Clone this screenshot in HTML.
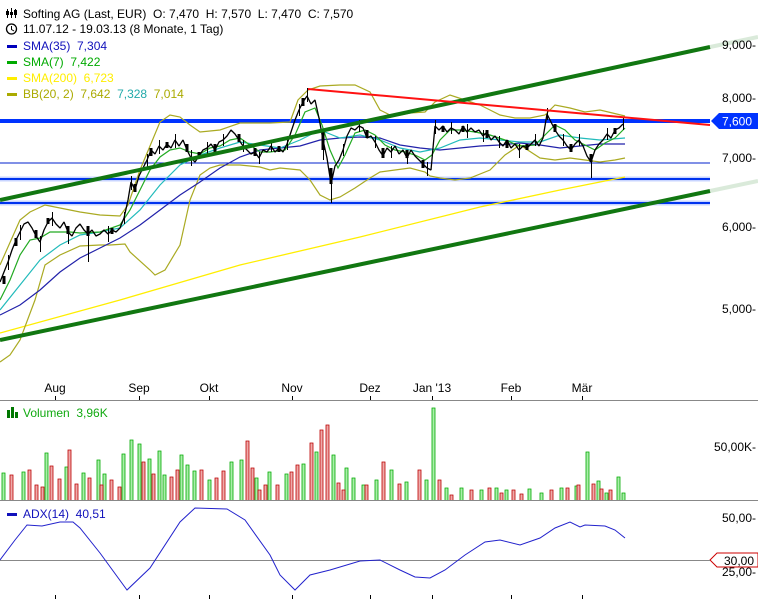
<!DOCTYPE html>
<html><head><meta charset="utf-8"><style>
html,body{margin:0;padding:0;background:#fff;}
svg{display:block;font-family:"Liberation Sans",sans-serif;font-size:12px;}
</style></head><body>
<svg width="758" height="600" xmlns="http://www.w3.org/2000/svg">
<rect width="758" height="600" fill="#fff"/>
<line x1="0" y1="179" x2="710" y2="179" stroke="#c8d4ff" stroke-width="5"/>
<line x1="0" y1="179" x2="710" y2="179" stroke="#0033ee" stroke-width="2"/>
<line x1="0" y1="203" x2="710" y2="203" stroke="#c8d4ff" stroke-width="5"/>
<line x1="0" y1="203" x2="710" y2="203" stroke="#0033ee" stroke-width="2"/>
<line x1="0" y1="163" x2="710" y2="163" stroke="#0022cc" stroke-width="1"/>
<line x1="0" y1="121" x2="710" y2="121" stroke="#0033ff" stroke-width="4"/>
<polyline points="0,333 120,300 240,265 360,237 480,207 560,190 625,177" fill="none" stroke="#ffee00" stroke-width="1.3"/>
<g fill="none" stroke-width="1.2">
<polyline stroke="#aaaa22" points="0,265 20,220 30,212 45,205 60,208 80,212 100,215 120,216 128,205 140,170 160,122 170,115 180,117 190,125 200,132 220,130 240,123 270,123 290,122 298,100 308,90 320,86 340,85 355,85 370,92 380,110 390,115 400,115 410,113 425,112 435,102 450,95 465,100 480,105 490,110 500,115 515,118 530,118 545,115 555,105 570,108 585,112 600,110 625,116"/>
<polyline stroke="#aaaa22" points="0,362 10,355 20,340 35,300 45,265 60,255 80,246 100,245 110,245 125,244 130,252 150,270 155,275 165,270 180,245 190,200 200,175 210,168 220,165 240,165 260,167 270,170 280,168 300,170 310,180 320,195 330,200 340,197 355,188 370,178 380,172 395,170 410,168 425,172 430,176 440,178 455,180 470,178 490,170 505,155 520,145 540,158 555,160 570,158 585,160 600,162 615,160 625,158"/>
<polyline stroke="#2222aa" points="0,315 20,305 40,290 60,272 80,258 100,248 120,238 140,225 160,210 180,195 200,182 220,168 240,157 260,150 280,148 300,146 320,140 340,138 360,137 380,138 400,145 420,148 440,150 460,148 480,146 500,145 520,143 540,145 560,148 580,146 600,144 625,144"/>
<polyline stroke="#22bbbb" points="0,310 20,285 40,260 60,245 80,235 100,232 120,228 140,210 160,185 180,165 200,155 220,148 240,142 260,145 280,148 300,140 320,130 340,138 360,135 380,140 400,148 420,152 440,148 460,140 480,138 500,140 520,142 540,142 560,135 580,138 600,140 625,138"/>
<polyline stroke="#22aa22" points="0,300 10,280 20,255 30,240 40,238 50,232 60,232 70,232 80,233 100,232 120,225 130,210 140,190 150,170 160,157 170,150 180,148 190,152 200,154 210,148 220,146 230,140 240,138 250,145 260,152 270,152 285,150 295,135 305,112 315,108 322,125 330,150 338,168 345,155 355,133 365,130 375,135 385,145 395,150 405,152 415,155 425,160 432,155 440,140 450,130 460,130 475,132 490,135 505,140 520,146 535,145 545,135 555,125 565,130 575,140 585,145 595,150 605,143 615,138 625,128"/>
</g>
<polyline fill="none" stroke="#000" stroke-width="1.3" stroke-linejoin="bevel" points="0,282 4,272 8,262 12,250 16,240 20,232 24,224 28,222 32,228 36,236 40,242 44,230 48,222 52,218 56,224 60,228 64,222 68,232 72,236 76,228 80,224 84,230 88,234 92,230 96,236 100,234 104,230 108,234 112,230 116,232 120,228 124,218 128,200 131,182 135,190 139,176 143,168 147,160 151,150 155,154 159,146 163,150 167,144 171,148 175,140 179,146 183,140 187,150 191,158 195,162 199,156 203,150 207,148 211,144 215,150 219,142 223,140 227,136 231,130 235,134 239,140 243,146 247,150 251,154 255,152 259,158 263,150 267,152 271,146 275,152 279,148 283,152 287,144 291,132 295,120 299,110 303,102 307,96 311,104 315,100 319,118 323,140 327,158 331,184 335,166 339,160 343,150 347,136 351,128 355,130 359,126 363,128 367,138 371,136 375,142 379,150 383,156 387,148 391,152 395,146 399,154 403,150 407,158 411,150 415,156 419,160 423,164 427,168 431,170 435,126 439,130 443,126 447,132 451,128 455,130 459,134 463,126 467,132 471,128 475,132 479,130 483,136 487,132 491,140 495,136 499,142 503,146 507,140 511,148 515,144 519,150 523,146 527,148 531,144 535,140 539,146 543,138 547,114 551,122 555,130 559,136 563,140 567,146 571,150 575,144 579,140 583,146 587,156 591,162 595,150 599,144 603,140 607,134 611,138 615,130 619,128 623,124"/>
<path fill="#000" d="M2.5 276h3v8h-3zM14.5 238h3v8h-3zM34.5 230h3v8h-3zM46.5 218h3v6h-3zM66.5 226h3v8h-3zM86.5 226h3v10h-3zM110.5 228h3v6h-3zM133.5 184h3v8h-3zM149.5 148h3v8h-3zM165.5 142h3v6h-3zM185.5 144h3v8h-3zM197.5 152h3v6h-3zM213.5 144h3v8h-3zM237.5 134h3v8h-3zM253.5 148h3v8h-3zM277.5 146h3v6h-3zM301.5 98h3v8h-3zM321.5 132h3v18h-3zM329.5 168h3v16h-3zM365.5 130h3v8h-3zM381.5 148h3v10h-3zM405.5 150h3v8h-3zM421.5 160h3v8h-3zM441.5 126h3v6h-3zM461.5 126h3v6h-3zM485.5 130h3v8h-3zM505.5 140h3v8h-3zM525.5 144h3v6h-3zM553.5 124h3v8h-3zM569.5 144h3v8h-3zM589.5 154h3v8h-3zM613.5 128h3v6h-3z"/>
<path fill="none" stroke="#000" stroke-width="1" d="M8.5 255V270M20.5 225V240M40.5 236V252M52.5 212V226M68.5 226V244M88.5 226V262M108.5 226V242M124.5 212V224M131.5 176V190M147.5 154V168M159.5 140V154M175.5 134V148M191.5 150V166M207.5 142V154M223.5 134V146M243.5 140V152M259.5 152V164M271.5 140V152M287.5 138V150M299.5 104V116M307.5 88V102M323.5 134V160M331.5 176V203M343.5 144V156M359.5 120V132M375.5 136V148M391.5 146V158M407.5 152V164M427.5 162V176M435.5 120V134M451.5 122V134M467.5 124V138M483.5 130V142M499.5 136V148M519.5 144V158M535.5 134V146M547.5 108V120M563.5 134V146M579.5 134V146M591.5 154V178M607.5 128V140M623.5 118V130"/>
<line x1="0" y1="200" x2="710" y2="47" stroke="#117711" stroke-width="4"/>
<line x1="710" y1="47" x2="758" y2="37" stroke="#117711" stroke-width="4" opacity="0.15"/>
<line x1="0" y1="340" x2="710" y2="191" stroke="#117711" stroke-width="4"/>
<line x1="710" y1="191" x2="758" y2="181" stroke="#117711" stroke-width="4" opacity="0.15"/>
<line x1="308" y1="89" x2="710" y2="125" stroke="#ff1111" stroke-width="2"/>
<polygon points="711,121 719,113 758,113 758,129 719,129" fill="#0033ff"/>
<text x="722" y="125.5" fill="#fff">7,600</text>
<g fill="#000" text-anchor="end">
<text x="756" y="49">9,000-</text>
<text x="756" y="102">8,000-</text>
<text x="756" y="162">7,000-</text>
<text x="756" y="231">6,000-</text>
<text x="756" y="313">5,000-</text>
<text x="756" y="451">50,00K-</text>
<text x="756" y="522">50,00-</text>
<text x="756" y="576">25,00-</text>
</g>
<polygon points="710,560 717,553 758,553 758,567 717,567" fill="#fff" stroke="#cc0000"/>
<text x="724" y="565" fill="#000">30,00</text>
<g fill="#000" text-anchor="middle">
<text x="55" y="392">Aug</text><text x="139" y="392">Sep</text><text x="209" y="392">Okt</text>
<text x="292" y="392">Nov</text><text x="370" y="392">Dez</text><text x="432" y="392">Jan '13</text>
<text x="511" y="392">Feb</text><text x="582" y="392">Mär</text>
</g>
<path stroke="#000" d="M55.5 396V400M139.5 396V400M209.5 396V400M292.5 396V400M370.5 396V400M432.5 396V400M511.5 396V400M582.5 396V400M55.5 595V599M139.5 595V599M209.5 595V599M292.5 595V599M370.5 595V599M432.5 595V599M511.5 595V599M582.5 595V599"/>
<line x1="0" y1="400.5" x2="758" y2="400.5" stroke="#888"/>
<line x1="0" y1="500.5" x2="758" y2="500.5" stroke="#888"/>
<line x1="0" y1="560.5" x2="710" y2="560.5" stroke="#888"/>
<path fill="#aaeeaa" stroke="#00aa00" stroke-width="0.8" d="M2 500V473h3V500M22 500V472h3V500M45 500V453h3V500M65 500V467h3V500M82 500V473h3V500M97 500V460h3V500M103 500V474h3V500M122 500V454h3V500M130 500V440h3V500M138 500V444h3V500M148 500V459h3V500M158 500V451h3V500M163 500V475h3V500M180 500V455h3V500M186 500V465h3V500M193 500V471h3V500M208 500V480h3V500M230 500V462h3V500M240 500V460h3V500M255 500V478h3V500M268 500V472h3V500M285 500V474h3V500M302 500V464h3V500M315 500V452h3V500M332 500V455h3V500M345 500V468h3V500M352 500V478h3V500M362 500V485h3V500M375 500V480h3V500M390 500V470h3V500M405 500V482h3V500M425 500V480h3V500M432 500V408h3V500M445 500V488h3V500M460 500V488h3V500M480 500V490h3V500M495 500V488h3V500M505 500V490h3V500M528 500V489h3V500M540 500V493h3V500M560 500V488h3V500M575 500V486h3V500M586 500V452h3V500M597 500V481h3V500M605 500V493h3V500M617 500V477h3V500M622 500V493h3V500"/>
<path fill="#eeaaaa" stroke="#bb0000" stroke-width="0.8" d="M10 500V475h3V500M28 500V470h3V500M35 500V485h3V500M41 500V487h3V500M50 500V466h3V500M58 500V479h3V500M68 500V450h3V500M75 500V484h3V500M88 500V478h3V500M100 500V485h3V500M110 500V480h3V500M118 500V487h3V500M142 500V462h3V500M152 500V474h3V500M170 500V477h3V500M176 500V470h3V500M200 500V470h3V500M215 500V478h3V500M222 500V471h3V500M246 500V441h3V500M251 500V468h3V500M258 500V490h3V500M264 500V485h3V500M276 500V485h3V500M290 500V472h3V500M296 500V465h3V500M310 500V443h3V500M320 500V430h3V500M326 500V425h3V500M337 500V483h3V500M342 500V490h3V500M365 500V485h3V500M382 500V462h3V500M398 500V484h3V500M418 500V470h3V500M438 500V480h3V500M450 500V495h3V500M470 500V490h3V500M488 500V488h3V500M500 500V493h3V500M512 500V490h3V500M520 500V494h3V500M550 500V490h3V500M566 500V488h3V500M577 500V485h3V500M592 500V484h3V500M600 500V489h3V500M609 500V490h3V500"/>
<polyline fill="none" stroke="#2222cc" stroke-width="1" points="0,560 15,540 27,525 42,526 60,522 73,522 80,528 100,553 127,590 150,568 180,522 195,508 227,509 245,520 270,555 280,575 295,590 300,585 310,575 330,570 360,561 380,560 400,570 415,577 430,578 445,570 465,555 485,542 500,540 520,545 540,538 555,528 570,522 580,527 585,525 605,526 615,530 625,538"/>
<g stroke="#000" stroke-width="1"><line x1="7.5" y1="9" x2="7.5" y2="18"/><line x1="11.5" y1="8" x2="11.5" y2="18"/><line x1="15.5" y1="9" x2="15.5" y2="18"/></g>
<rect x="6" y="11" width="3" height="4" fill="#000"/><rect x="10" y="12" width="3" height="3" fill="#000"/><rect x="14" y="10" width="3" height="5" fill="#000"/>
<text x="23" y="18" fill="#000" xml:space="preserve">Softing AG (Last, EUR)  O: 7,470  H: 7,570  L: 7,470  C: 7,570</text>
<circle cx="11.5" cy="29" r="5" fill="none" stroke="#000" stroke-width="1.3"/><path d="M11.5 26v3.5l2.5 1.5" stroke="#000" fill="none"/>
<text x="23" y="33" fill="#000">11.07.12 - 19.03.13 (8 Monate, 1 Tag)</text>
<rect x="7" y="45" width="10" height="3" fill="#0000bb"/><text x="23" y="50" fill="#1111bb" xml:space="preserve">SMA(35)  7,304</text>
<rect x="7" y="61" width="10" height="3" fill="#00aa00"/><text x="23" y="66" fill="#00aa00" xml:space="preserve">SMA(7)  7,422</text>
<rect x="7" y="77" width="10" height="3" fill="#ffee00"/><text x="23" y="82" fill="#ffee00" xml:space="preserve">SMA(200)  6,723</text>
<rect x="7" y="93" width="10" height="3" fill="#aaaa00"/><text x="23" y="98" fill="#aaaa00" xml:space="preserve">BB(20, 2)  7,642  <tspan fill="#22aaaa">7,328</tspan>  7,014</text>
<rect x="7" y="410" width="3" height="8" fill="#007700"/><rect x="11" y="407" width="3" height="11" fill="#007700"/><rect x="15" y="412" width="3" height="6" fill="#007700"/>
<text x="23" y="417" fill="#11aa11" xml:space="preserve">Volumen  3,96K</text>
<rect x="7" y="513" width="10" height="3" fill="#1111bb"/><text x="23" y="518" fill="#1111bb" xml:space="preserve">ADX(14)  40,51</text>
</svg>
</body></html>
